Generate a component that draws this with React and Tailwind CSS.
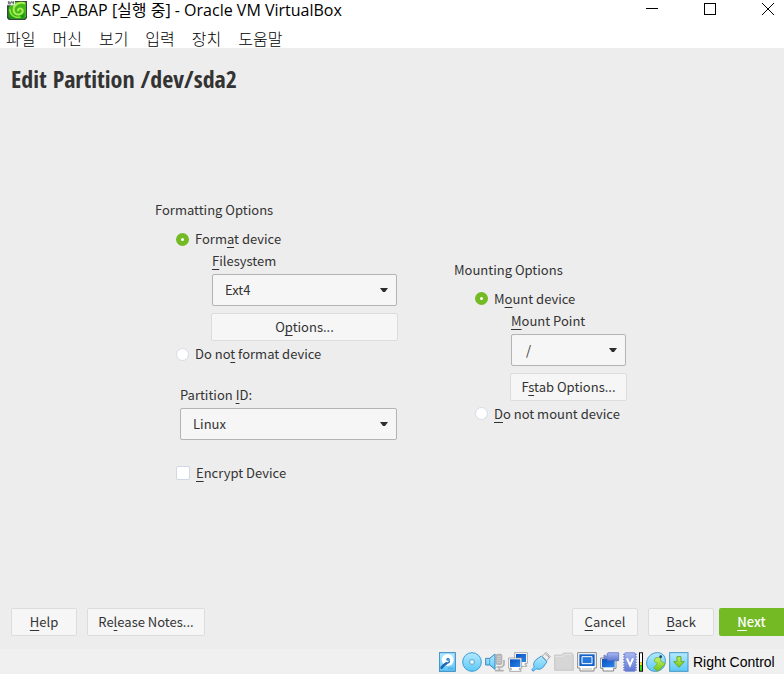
import { useState } from "react";

const menus = ["파일", "머신", "보기", "입력", "장치", "도움말"];

function Key({ children }) {
  return <u className="underline decoration-1 underline-offset-3 [text-decoration-skip-ink:none]">{children}</u>;
}

function Button({ className = "", children }) {
  return (
    <button
      type="button"
      className={`h-7 shrink-0 rounded-xs border border-[#dcdcdc] bg-[#f6f6f6] text-center leading-5 ${className}`}
    >
      {children}
    </button>
  );
}

function Select({ id, value, className = "", pad = "pl-3" }) {
  return (
    <div className={`relative mt-[3px] ${className}`}>
      <select
        id={id}
        className={`h-8 w-full appearance-none rounded-xs border border-[#b4b4b4] bg-[#f6f6f6] pr-8 leading-5 ${pad}`}
      >
        <option>{value}</option>
      </select>
      <svg className="pointer-events-none absolute top-3.5 right-[9px] h-1 w-2" viewBox="0 0 8 4">
        <path d="M0 0h8L5 4H3z" fill="#2d2d2d" />
      </svg>
    </div>
  );
}

function Radio({ name, checked, onChange, children }) {
  return (
    <label className="ml-[21px] flex h-5 items-center gap-1.5">
      <input
        type="radio"
        name={name}
        checked={checked}
        onChange={onChange}
        className="size-[13px] appearance-none rounded-full border border-[#d5dbe8] bg-white checked:border-[5px] checked:border-[#73ba25]"
      />
      <span>{children}</span>
    </label>
  );
}

function AppIcon() {
  return (
    <svg className="h-[19px] w-5" viewBox="0 0 60 57">
      <path d="M0 0h60v51l-6 6H5l-5-6z" fill="#34463f" />
      <path d="M24 3l30-1 3 6v40l-6 5H10l-5-6V18z" fill="#45b81c" />
      <path d="M5 28c8 18 34 22 48 6v13l-5 6H10l-5-5z" fill="#1f9a14" />
      <path d="M55 8C40 2 22 8 20 23c-2 13 8 20 19 17 9-3 11-14 3-17-6-2-11 3-8 8" fill="none" stroke="#a9ee52" strokeWidth="6" />
      <path d="M8 24c1 20 17 28 33 24" fill="none" stroke="#8be83a" strokeWidth="5" />
      <path d="M0 0h24v13H0z" fill="#e9eeee" />
      <path d="M5 0v9h5V4H5M14 0v5h6M19 0v10" fill="none" stroke="#333" strokeWidth="2" />
    </svg>
  );
}

function StatusIcon({ label, width = "w-5", box = "0 0 60 60", children }) {
  return (
    <svg role="img" aria-label={label} className={`h-5 shrink-0 ${width}`} viewBox={box}>
      {children}
    </svg>
  );
}

function StatusIcons() {
  return (
    <div className="flex items-center gap-[3px]">
      <svg className="absolute size-0">
        <defs>
          <linearGradient id="sky" x1="0" y1="0" x2="0" y2="1">
            <stop offset="0" stopColor="#b4eaff" />
            <stop offset="1" stopColor="#5cc8f8" />
          </linearGradient>
          <linearGradient id="blue" x1="0" y1="0" x2="1" y2="1">
            <stop offset="0" stopColor="#0a50c0" />
            <stop offset="1" stopColor="#2b86e8" />
          </linearGradient>
          <linearGradient id="violet" x1="0" y1="0" x2="0" y2="1">
            <stop offset="0" stopColor="#a9b9f2" />
            <stop offset="1" stopColor="#5f78d2" />
          </linearGradient>
          <linearGradient id="lime" x1="0" y1="0" x2="0" y2="1">
            <stop offset="0" stopColor="#c6f25c" />
            <stop offset="1" stopColor="#6fc41a" />
          </linearGradient>
        </defs>
      </svg>
      <StatusIcon label="Hard disk">
        <rect x="1" y="2" width="48" height="56" fill="url(#sky)" stroke="#3488c4" strokeWidth="3" />
        <circle cx="26" cy="24" r="18" fill="#fff" />
        <path d="M22 34c-6 3-9 7-14 13" fill="none" stroke="#1f66b4" strokeWidth="8" strokeLinecap="round" />
        <path d="M22 33c7 1 10-3 9-8" fill="none" stroke="#1f66b4" strokeWidth="4" />
        <circle cx="27" cy="22" r="5" fill="#3b8fd6" />
        <path d="M26 46h18v7H26z" fill="#58b4ea" />
      </StatusIcon>
      <StatusIcon label="Optical drive">
        <circle cx="30" cy="30" r="28" fill="url(#sky)" stroke="#3b9bd5" strokeWidth="3" />
        <circle cx="30" cy="30" r="8" fill="#9fdcf8" stroke="#6f9fb8" strokeWidth="2" />
        <circle cx="30" cy="30" r="4" fill="#fff" />
      </StatusIcon>
      <StatusIcon label="Audio">
        <rect x="32" y="5" width="20" height="34" rx="6" fill="#b4b4b4" />
        <path d="M57 24v14l-6 7H34M43 45v10M30 56h26" fill="none" stroke="#b0b0b0" strokeWidth="5" />
        <path d="M36 13h12M36 19h12M36 25h12M36 31h12" stroke="#dedede" strokeWidth="2" />
        <path d="M2 19h12L30 6v46L14 39H2z" fill="url(#sky)" stroke="#3b86bd" strokeWidth="3" />
        <path d="M14 19v20" stroke="#3b86bd" strokeWidth="2" />
      </StatusIcon>
      <StatusIcon label="Network">
        <path d="M20 2h38v32h-7v5h5v4H20z" fill="#fff" stroke="#858585" strokeWidth="2" />
        <path d="M24 6h30v24H24z" fill="url(#blue)" />
        <path d="M2 18h39v31h-7v4h5v5H5v-5h5v-4H2z" fill="#fff" stroke="#858585" strokeWidth="2" />
        <path d="M6 22h31v23H6z" fill="url(#blue)" />
      </StatusIcon>
      <StatusIcon label="USB">
        <path d="M34 13L45 1l13 13-11 12z" fill="#eee" stroke="#858585" strokeWidth="2" />
        <path d="M45 7l4 4M50 12l4 4" stroke="#777" strokeWidth="3" />
        <path d="M31 12l17 17-11 16c-6 8-16 8-22 5l-8 8-5-5 8-8c-4-6-2-15 4-21z" fill="url(#sky)" stroke="#4a94ca" strokeWidth="3" />
      </StatusIcon>
      <StatusIcon label="Shared folders">
        <path d="M2 9h22l5-6h25l4 6v46H2z" fill="#d6d6d6" stroke="#bababa" strokeWidth="2" />
        <path d="M3 13h24l5-6h22" fill="none" stroke="#eee" strokeWidth="2" />
      </StatusIcon>
      <StatusIcon label="Display">
        <path d="M2 2h56v46h-7v9H9v-9H2z" fill="#fff" stroke="#858585" strokeWidth="3" />
        <path d="M7 7h46v35H7z" fill="#1262cc" />
        <path d="M15 14h30v21H15z" fill="#2676dc" stroke="#fff" strokeWidth="3" />
        <path d="M15 51h30" stroke="#999" strokeWidth="2" />
      </StatusIcon>
      <StatusIcon label="Recording">
        <path d="M2 18h46v31h-7v8H9v-8H2z" fill="#fff" stroke="#858585" strokeWidth="3" />
        <path d="M6 21h38v25H6z" fill="url(#blue)" />
        <path d="M12 9l9 5V5l4-3h31v24H24l-3-3v-5l-9 5z" fill="url(#violet)" stroke="#5365bb" strokeWidth="2" />
      </StatusIcon>
      <div className="flex gap-0.5">
        <StatusIcon label="Processor" width="w-3.5" box="0 0 42 60">
          <path d="M0 7h42M0 15h42M0 23h42M0 31h42M0 39h42M0 47h42M0 54h42" stroke="#6a80d0" strokeWidth="3" />
          <rect x="5" y="2" width="32" height="56" rx="3" fill="url(#violet)" stroke="#6377cc" strokeWidth="2" />
          <path d="M12 19l9 21 9-21" fill="none" stroke="#fff" strokeWidth="6" />
        </StatusIcon>
        <StatusIcon label="Processor load" width="w-1" box="0 0 12 60">
          <path d="M0 1h12v58H0z" fill="#000" />
          <path d="M3 4h6v27H3z" fill="#fff" />
          <path d="M3 31h6v9H3z" fill="#f4e61b" />
          <path d="M3 40h6v16H3z" fill="#35df13" />
        </StatusIcon>
      </div>
      <StatusIcon label="Mouse integration">
        <path d="M2 36C1 18 14 2 34 2c14 0 24 9 24 24 0 18-12 32-30 32C12 58 3 49 2 36z" fill="url(#sky)" stroke="#4596c5" strokeWidth="3" />
        <path d="M29 17h15v10l14 8-22 23-13-10 11-13-10-8z" fill="url(#lime)" stroke="#6aa92c" strokeWidth="2" />
        <circle cx="44" cy="14" r="4" fill="#17465d" />
      </StatusIcon>
      <StatusIcon label="Keyboard capture">
        <rect x="2" y="2" width="55" height="56" fill="url(#sky)" stroke="#4596c5" strokeWidth="3" />
        <path d="M24 14h12v15h10L30 46 14 29h10z" fill="url(#lime)" stroke="#6aa92c" strokeWidth="3" />
      </StatusIcon>
    </div>
  );
}

function TitleBar() {
  return (
    <div className="flex h-5 items-center pr-2.5 pl-[7px]">
      <AppIcon />
      <span className="ml-[5px] flex-1 text-base leading-5 font-['Open_Sans','Noto_Sans_CJK_KR',sans-serif]">
        SAP_ABAP [실행 중] - Oracle VM VirtualBox
      </span>
      <div className="flex gap-[46px] self-start pt-[3px]">
        <button type="button" aria-label="Minimize">
          <svg className="h-3 w-3" viewBox="0 0 12 12" shapeRendering="crispEdges">
            <path d="M0 5h12v1H0z" />
          </svg>
        </button>
        <button type="button" aria-label="Maximize">
          <svg className="h-3 w-3" viewBox="0 0 12 12" fill="none" stroke="#000" shapeRendering="crispEdges">
            <path d="M.5.5h11v11H.5z" />
          </svg>
        </button>
        <button type="button" aria-label="Close">
          <svg className="h-3 w-3" viewBox="0 0 12 12" fill="none" stroke="#000">
            <path d="M0 0l12 12M12 0L0 12" />
          </svg>
        </button>
      </div>
    </div>
  );
}

export default function App() {
  const [format, setFormat] = useState(true);
  const [mount, setMount] = useState(true);

  return (
    <div className="flex min-h-screen flex-col bg-[#ededed] text-[13px] leading-5 text-[#333] font-['Noto_Sans_CJK_KR',sans-serif]">
      <header className="h-12 bg-white text-black">
        <TitleBar />
        <nav className="flex gap-[17px] pt-2 pl-1.5 text-base leading-5 font-light">
          {menus.map((menu) => (
            <button type="button" key={menu}>{menu}</button>
          ))}
        </nav>
      </header>

      <main className="flex flex-1 flex-col">
        <h1 className="pt-[15px] pl-[11px] text-2xl leading-8 font-bold font-['Open_Sans_Condensed','Liberation_Sans_Narrow','Open_Sans',sans-serif]">
          Edit Partition /dev/sda2
        </h1>

        <div className="flex flex-1 items-center justify-center gap-14 pr-0.5 pb-5">
          <section className="w-[243px]">
            <h2>Formatting Options</h2>
            <div className="mt-[9px]">
              <Radio name="format" checked={format} onChange={() => setFormat(true)}>
                Form<Key>a</Key>t device
              </Radio>
              <div className="mt-0.5 ml-14">
                <label htmlFor="filesystem" className="ml-px block"><Key>F</Key>ilesystem</label>
                <Select id="filesystem" value="Ext4" className="mx-px" />
                <Button className="mt-[7px] w-full">O<Key>p</Key>tions...</Button>
              </div>
              <div className="mt-[3px]">
                <Radio name="format" checked={!format} onChange={() => setFormat(false)}>
                  Do no<Key>t</Key> format device
                </Radio>
              </div>
            </div>
            <div className="mt-[21px] mr-px ml-[25px]">
              <label htmlFor="partition-id" className="block">Partition <Key>I</Key>D:</label>
              <Select id="partition-id" value="Linux" />
            </div>
            <label className="mt-[23px] ml-[21px] flex h-5 items-center gap-1.5">
              <input type="checkbox" className="size-3.5 appearance-none rounded-xs border border-[#d0d8e8] bg-white checked:bg-[#73ba25]" />
              <span><Key>E</Key>ncrypt Device</span>
            </label>
          </section>

          <section className="w-[173px]">
            <h2>Mounting Options</h2>
            <div className="mt-[9px]">
              <Radio name="mount" checked={mount} onChange={() => setMount(true)}>
                M<Key>o</Key>unt device
              </Radio>
              <div className="mt-0.5 ml-14">
                <label htmlFor="mount-point" className="ml-px block"><Key>M</Key>ount Point</label>
                <Select id="mount-point" value="/" className="mx-px" pad="pl-3.5" />
                <Button className="mt-[7px] w-full">F<Key>s</Key>tab Options...</Button>
              </div>
              <div className="mt-[3px]">
                <Radio name="mount" checked={!mount} onChange={() => setMount(false)}>
                  <Key>D</Key>o not mount device
                </Radio>
              </div>
            </div>
          </section>
        </div>

        <div className="flex pb-[13px] pl-[11px]">
          <Button className="w-[66px]"><Key>H</Key>elp</Button>
          <Button className="ml-2.5 w-[118px]">Re<Key>l</Key>ease Notes...</Button>
          <Button className="ml-auto w-[66px]"><Key>C</Key>ancel</Button>
          <Button className="ml-2.5 w-[66px]"><Key>B</Key>ack</Button>
          <button type="button" className="ml-[5px] h-7 w-[65px] rounded-l-xs bg-[#73ba25] font-medium text-white">
            <Key>N</Key>ext
          </button>
        </div>
      </main>

      <footer className="flex h-[25px] items-center justify-end gap-1 bg-[#f0f0f0] pr-1.5 text-black">
        <StatusIcons />
        <span className="w-[85px] text-sm leading-5 font-['Liberation_Sans',sans-serif]">Right Control</span>
      </footer>
    </div>
  );
}
